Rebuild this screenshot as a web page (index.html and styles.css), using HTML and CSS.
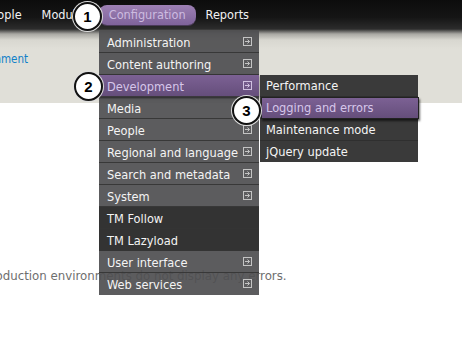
FILE: index.html
```html
<!DOCTYPE html>
<html lang="en">
<head>
  <meta charset="UTF-8">
  <title>Configuration menu</title>
  <link rel="stylesheet" href="styles.css">
</head>
<body>

  <div class="toolbar">
    <ul class="nav">
      <li class="cut-people">People</li>
      <li>Modules</li>
      <li class="active">Configuration</li>
      <li>Reports</li>
    </ul>
  </div>

  <div class="region">
    <a class="crumb" href="#">Environment</a>
  </div>

  <div class="content">
    <p class="help">Production environments do not display any errors.</p>
  </div>

  <!-- dropdown -->
  <ul class="menu">
    <li>Administration <svg class="more" viewBox="0 0 9 9"><rect x="0.5" y="0.5" width="8" height="8"/><path d="M2 4.5h4.5M4.5 2.5l2 2-2 2"/></svg></li>
    <li>Content authoring <svg class="more" viewBox="0 0 9 9"><rect x="0.5" y="0.5" width="8" height="8"/><path d="M2 4.5h4.5M4.5 2.5l2 2-2 2"/></svg></li>
    <li class="open">Development <svg class="more" viewBox="0 0 9 9"><rect x="0.5" y="0.5" width="8" height="8"/><path d="M2 4.5h4.5M4.5 2.5l2 2-2 2"/></svg>
      <ul class="submenu">
        <li>Performance</li>
        <li class="hover">Logging and errors</li>
        <li>Maintenance mode</li>
        <li>jQuery update</li>
      </ul>
    </li>
    <li>Media <svg class="more" viewBox="0 0 9 9"><rect x="0.5" y="0.5" width="8" height="8"/><path d="M2 4.5h4.5M4.5 2.5l2 2-2 2"/></svg></li>
    <li>People <svg class="more" viewBox="0 0 9 9"><rect x="0.5" y="0.5" width="8" height="8"/><path d="M2 4.5h4.5M4.5 2.5l2 2-2 2"/></svg></li>
    <li>Regional and language <svg class="more" viewBox="0 0 9 9"><rect x="0.5" y="0.5" width="8" height="8"/><path d="M2 4.5h4.5M4.5 2.5l2 2-2 2"/></svg></li>
    <li>Search and metadata <svg class="more" viewBox="0 0 9 9"><rect x="0.5" y="0.5" width="8" height="8"/><path d="M2 4.5h4.5M4.5 2.5l2 2-2 2"/></svg></li>
    <li>System <svg class="more" viewBox="0 0 9 9"><rect x="0.5" y="0.5" width="8" height="8"/><path d="M2 4.5h4.5M4.5 2.5l2 2-2 2"/></svg></li>
    <li class="plain">TM Follow</li>
    <li class="plain">TM Lazyload</li>
    <li>User interface <svg class="more" viewBox="0 0 9 9"><rect x="0.5" y="0.5" width="8" height="8"/><path d="M2 4.5h4.5M4.5 2.5l2 2-2 2"/></svg></li>
    <li>Web services <svg class="more" viewBox="0 0 9 9"><rect x="0.5" y="0.5" width="8" height="8"/><path d="M2 4.5h4.5M4.5 2.5l2 2-2 2"/></svg></li>
  </ul>

  <!-- step markers -->
  <span class="step step-1">1</span>
  <span class="step step-2">2</span>
  <span class="step step-3">3</span>

</body>
</html>
```
FILE: styles.css
```css
body {
  margin: 0;
  width: 462px;
  height: 346px;
  overflow: hidden;
  position: relative;
  background: #fff;
  font-family: "DejaVu Sans Condensed", "DejaVu Sans", sans-serif;
}

.toolbar {
  height: 29px;
  background: linear-gradient(#0c0c0c, #151515 60%, #2c2c2c);
}

.nav {
  list-style: none;
  margin: 0 0 0 -10px;
  padding: 0;
  display: flex;
  align-items: center;
  height: 29px;
  color: #f2f2f2;
  font-size: 12.6px;
}

.nav li {
  padding: 0 10px;
}

.nav .cut-people {
  margin-left: -16px;
}

.nav .active {
  background: linear-gradient(#9d80b4, #7f639a);
  color: #cdbbe0;
  border-radius: 8px;
  padding: 2px 10px 3px;
  margin-top: 1px;
  box-shadow: 0 1px 0 #4a3a58;
}

.region {
  height: 74px;
  background: linear-gradient(#2c2c2c, #a9a8a3 5px, #d8d7d0 11px, #e0dfd8 20px);
}

.crumb {
  display: block;
  padding-top: 23px;
  margin-left: -38px;
  color: #1080c8;
  text-decoration: none;
  font-size: 11.5px;
}

.content {
  padding-top: 166px;
}

.help {
  margin: 0 0 0 -16px;
  color: #6e6e6e;
  font-family: "DejaVu Sans", sans-serif;
  font-size: 11.8px;
}

.menu {
  list-style: none;
  margin: 0;
  padding: 1px 0 0;
  position: absolute;
  left: 99px;
  top: 30px;
  width: 160px;
  background: rgba(80, 80, 82, 0.93);
  color: #f4f4f4;
  font-size: 12.7px;
}

.menu > li {
  position: relative;
  height: 21px;
  line-height: 23px;
  padding-left: 8px;
  border-bottom: 1px solid rgba(52, 52, 52, 0.9);
  white-space: nowrap;
}

.menu > li:last-child {
  height: 22px;
  border-bottom: none;
}

.more {
  position: absolute;
  right: 7px;
  top: 6px;
  width: 9px;
  height: 9px;
  fill: none;
  stroke: #c4c4c4;
  stroke-width: 1;
}

.menu > li.plain {
  background: rgba(48, 48, 48, 0.95);
}

.menu > li.open {
  background: linear-gradient(#7c6194, #654e7b);
  color: #d6c6ea;
  box-shadow: 0 1px 2px rgba(0, 0, 0, 0.6);
}

.open .more {
  stroke: #d0c0e0;
}

.submenu {
  list-style: none;
  margin: 0;
  padding: 0;
  position: absolute;
  left: 161px;
  top: 0;
  width: 158px;
  background: #3a3a3a;
  color: #f4f4f4;
}

.submenu li {
  height: 21px;
  line-height: 22px;
  padding-left: 6px;
  border-bottom: 1px solid #2f2f2f;
}

.submenu li:last-child {
  border-bottom: none;
}

.submenu li.hover {
  background: linear-gradient(#7c6194, #654e7b);
  color: #d6c6ea;
  border: 1px solid #222;
  margin-left: 1px;
  margin-right: -1px;
  height: 20px;
  line-height: 20px;
  padding-left: 4px;
  box-shadow: 1px 2px 2px rgba(0, 0, 0, 0.6);
}

.step {
  position: absolute;
  width: 25px;
  height: 25px;
  border: 2px solid #111;
  border-radius: 50%;
  background: #fff;
  box-shadow: 0 0 0 1px #ddd;
  color: #000;
  font: bold 15px "Liberation Sans", Arial, sans-serif;
  line-height: 25px;
  text-align: center;
}

.step-1 { left: 73px; top: 2px; }
.step-2 { left: 74px; top: 72px; }
.step-3 { left: 232px; top: 96px; }
```
